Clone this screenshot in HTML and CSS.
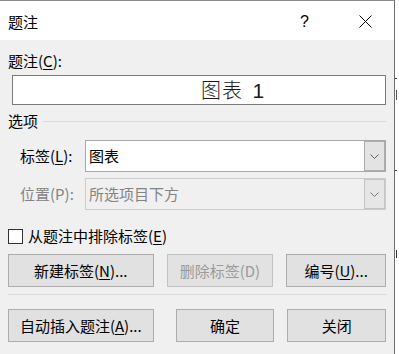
FILE: index.html
```html
<!DOCTYPE html>
<html lang="zh-CN">
<head>
<meta charset="utf-8">
<title>题注</title>
<link rel="stylesheet" href="styles.css">
</head>
<body>
<div class="screen">
  <div class="dialog">
    <div class="titlebar">
      <span class="title">题注</span>
      <span class="help">?</span>
      <span class="close">
        <svg width="13" height="13" viewBox="0 0 13 13"><path d="M0.5 0.5 L12.5 12.5 M12.5 0.5 L0.5 12.5" stroke="#000" stroke-width="1" fill="none"/></svg>
      </span>
    </div>
    <div class="content">
      <div class="label">题注(<u>C</u>):</div>
      <div class="caption-box">图表 <span class="num">1</span></div>
      <div class="group-head"><span class="group-title">选项</span><span class="rule"></span></div>
      <div class="field-row">
        <span class="field-label">标签(<u>L</u>):</span>
        <div class="combo">
          <span class="combo-text">图表</span>
          <span class="combo-btn"><svg width="9" height="5" viewBox="0 0 9 5"><path d="M0.5 0.5 L4.5 4.5 L8.5 0.5" stroke="#606060" stroke-width="1" fill="none"/></svg></span>
        </div>
      </div>
      <div class="field-row field-row-2 is-disabled">
        <span class="field-label">位置(P):</span>
        <div class="combo">
          <span class="combo-text">所选项目下方</span>
          <span class="combo-btn"><svg width="9" height="5" viewBox="0 0 9 5"><path d="M0.5 0.5 L4.5 4.5 L8.5 0.5" stroke="#7a7a7a" stroke-width="1" fill="none"/></svg></span>
        </div>
      </div>
      <div class="check-row"><span class="checkbox"></span><span class="check-text">从题注中排除标签(<u>E</u>)</span></div>
      <div class="btn-row row-1">
        <span class="btn btn-wide">新建标签(<u>N</u>)...</span>
        <span class="btn btn-del disabled">删除标签(D)</span>
        <span class="btn btn-num">编号(<u>U</u>)...</span>
      </div>
      <div class="sep"></div>
      <div class="btn-row row-2">
        <span class="btn btn-wide">自动插入题注(<u>A</u>)...</span>
        <span class="btn btn-ok">确定</span>
        <span class="btn btn-close">关闭</span>
      </div>
    </div>
  </div>
  <div class="outside"></div>
</div>
</body>
</html>
```
FILE: styles.css
```css
html, body {
  margin: 0;
  padding: 0;
  background: #ffffff;
}
body {
  font-family: "Noto Sans CJK SC", "Noto Sans", sans-serif;
  font-size: 15px;
  color: #000;
}
u { text-decoration: underline; text-underline-offset: 2px; text-decoration-thickness: 1px; }

.screen {
  display: flex;
  width: 399px;
  height: 354px;
  overflow: hidden;
}
.dialog {
  width: 395px;
  height: 354px;
  border-top: 1px solid #8a8a8a;
  border-right: 1px solid #6e6e6e;
  background: #f0f0f0;
  box-sizing: border-box;
  flex: none;
}
.outside {
  flex: 1;
  background: #fff;
  background-image:
    linear-gradient(#333, #333),
    linear-gradient(#555, #555),
    linear-gradient(#444, #444),
    linear-gradient(#333, #333);
  background-repeat: no-repeat;
  background-size: 2px 1px, 1px 10px, 2px 1px, 1px 8px;
  background-position: 0 78px, 1px 90px, 0 170px, 1px 250px;
}

.titlebar {
  height: 39px;
  background: #ffffff;
  display: flex;
  align-items: center;
  line-height: 20px;
}
.title { margin-left: 8px; margin-top: 3px; }
.help {
  margin-left: auto;
  margin-top: 2px;
  font-family: "Liberation Sans", sans-serif;
  font-size: 16px;
  width: 12px;
}
.close {
  display: flex;
  margin-left: 47px;
  margin-right: 22px;
  margin-top: 2px;
}

.content {
  padding: 0 8px;
}
.label {
  line-height: 20px;
  margin-top: 11px;
}
.caption-box {
  margin-top: 4px;
  margin-left: 4px;
  height: 30px;
  box-sizing: border-box;
  border: 1px solid #7a7a7a;
  background: #fff;
  font-size: 20px;
  font-weight: 300;
  color: #1a1a1a;
  line-height: 28px;
  padding-left: 188px;
  letter-spacing: 1px;
  word-spacing: 4px;
}
.num {
  font-family: "Liberation Sans", sans-serif;
  font-size: 21px;
}
.group-head {
  display: flex;
  align-items: center;
  margin-top: 6px;
  line-height: 20px;
}
.rule {
  flex: 1;
  height: 1px;
  background: #dcdcdc;
  margin-left: 5px;
}
.field-row {
  display: flex;
  align-items: center;
  margin-top: 9px;
}
.field-row-2 { margin-top: 6px; }
.field-label {
  width: 65px;
  margin-left: 12px;
  line-height: 20px;
}
.combo {
  flex: 1;
  height: 32px;
  box-sizing: border-box;
  border: 1px solid #a9a9a9;
  background: #fff;
  display: flex;
  align-items: stretch;
}
.combo-text {
  flex: 1;
  padding-left: 3px;
  line-height: 30px;
}
.combo-btn {
  width: 21px;
  background: #e3e3e3;
  box-shadow: inset 0 0 0 1px #adadad;
  display: flex;
  align-items: center;
  justify-content: center;
}
.is-disabled .field-label, .is-disabled .combo-text { color: #838383; }
.is-disabled .combo { background: #f0f0f0; border-color: #cccccc; }
.is-disabled .combo-btn { background: #e6e6e6; box-shadow: inset 0 0 0 1px #c4c4c4; }

.check-row {
  display: flex;
  align-items: center;
  margin-top: 18px;
  height: 16px;
}
.checkbox {
  width: 15px;
  height: 15px;
  box-sizing: border-box;
  border: 1px solid #333;
  background: #fff;
  flex: none;
}
.check-text {
  margin-left: 5px;
  line-height: 20px;
}

.btn-row {
  display: flex;
}
.row-1 { margin-top: 10px; }
.row-2 { margin-top: 14px; }
.btn {
  height: 33px;
  box-sizing: border-box;
  border: 1px solid #adadad;
  background: #e1e1e1;
  display: flex;
  align-items: center;
  justify-content: center;
  line-height: 20px;
}
.btn-wide { width: 146px; }
.btn-del { width: 107px; margin-left: 13px; }
.btn-num { width: 100px; margin-left: 13px; }
.btn-ok { width: 99px; margin-left: 22px; }
.btn-close { width: 99px; margin-left: 13px; }
.btn.disabled {
  color: #9a9a9a;
  border-color: #c2c2c2;
  background: #e2e2e2;
}
.sep {
  height: 1px;
  background: #dcdcdc;
  margin-top: 7px;
  margin-right: -1px;
}
```
